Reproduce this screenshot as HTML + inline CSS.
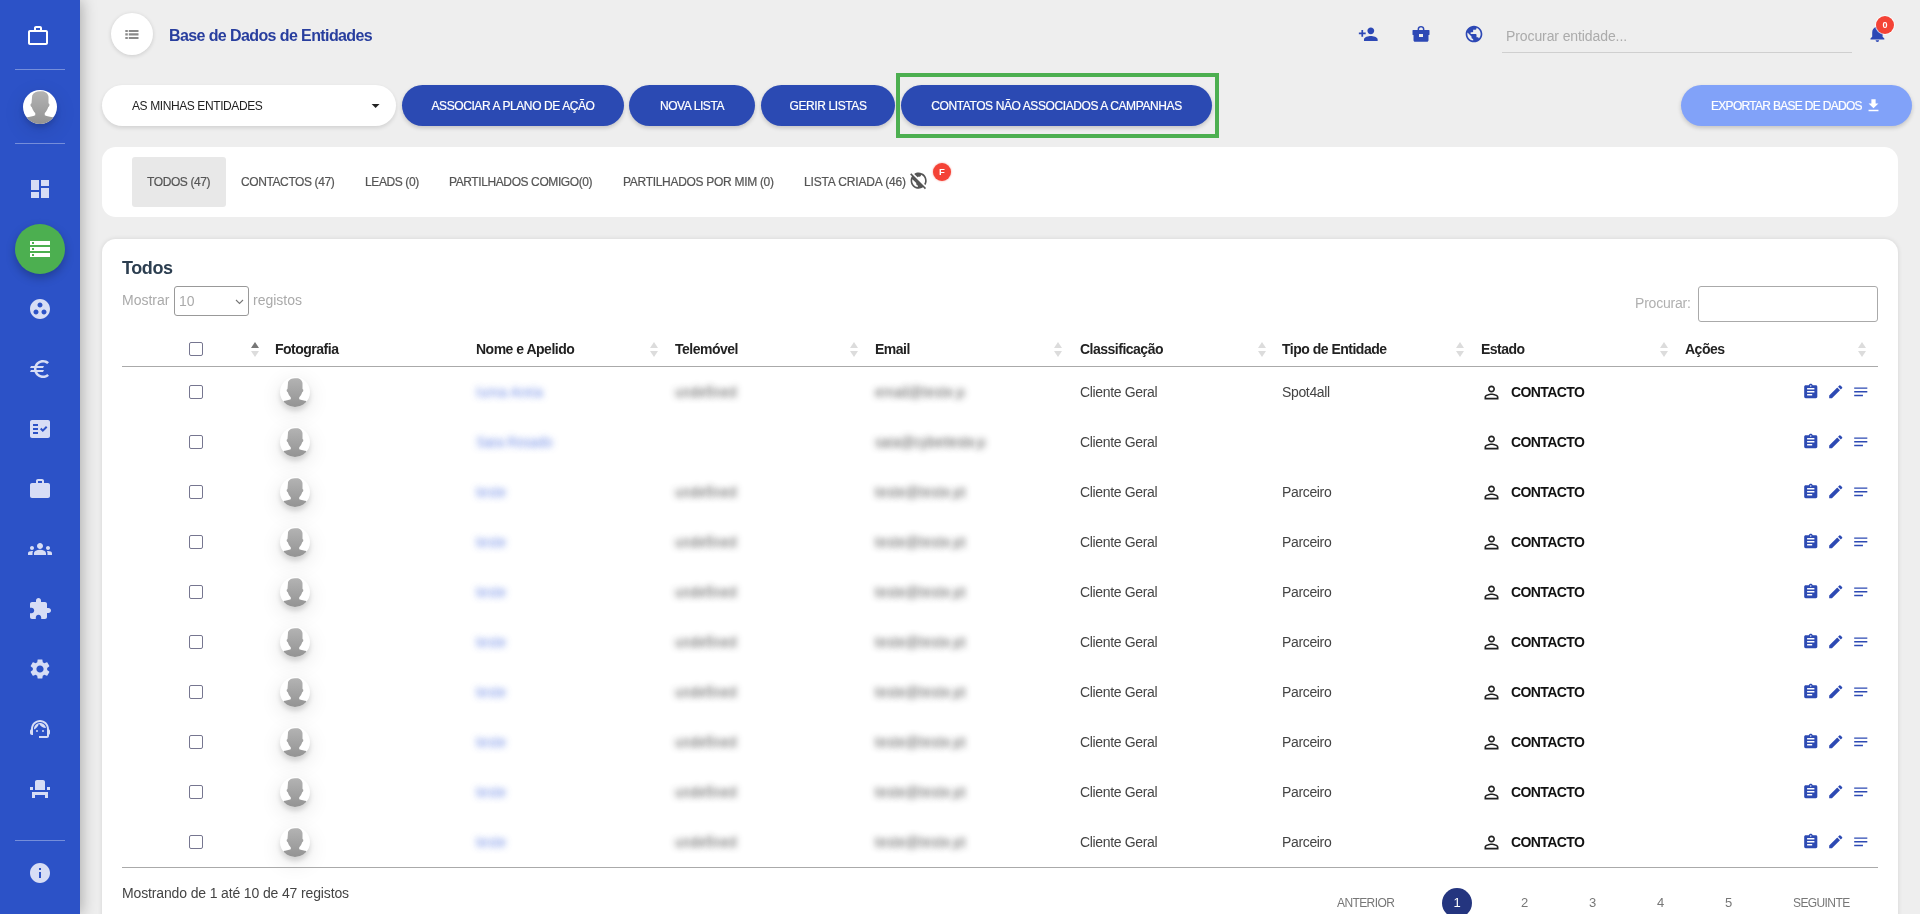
<!DOCTYPE html><html><head><meta charset="utf-8"><title>Base de Dados de Entidades</title><style>
*{box-sizing:border-box;margin:0;padding:0}
html,body{width:1920px;height:914px;overflow:hidden;background:#eeeeee;font-family:"Liberation Sans",sans-serif;position:relative}
.ab{position:absolute}
.ic{position:absolute;display:block}
.av{position:absolute;border-radius:50%;background:#fff;overflow:hidden}
.av svg{display:block}
#side{position:absolute;left:0;top:0;width:80px;height:914px;background:#2c52c7;box-shadow:2px 0 14px rgba(0,0,0,.28);z-index:5}
.div{position:absolute;left:15px;width:50px;height:1px;background:rgba(255,255,255,.35)}
.t{position:absolute;white-space:nowrap;line-height:1}
.btn{position:absolute;top:85px;height:41px;border-radius:21px;background:#2b4ab3;color:#fff;font-size:12px;letter-spacing:-.4px;line-height:43px;text-align:center;-webkit-text-stroke:.2px #fff;box-shadow:0 2px 4px rgba(0,0,0,.18)}
.card{position:absolute;background:#fff;border-radius:14px}
.tab{position:absolute;top:157px;height:50px;line-height:50px;font-size:12px;letter-spacing:-.4px;color:#555;-webkit-text-stroke:.2px #555;white-space:nowrap}
.th{position:absolute;top:341px;font-size:14px;font-weight:bold;color:#222;letter-spacing:-.5px;white-space:nowrap;line-height:16px}
.sort{position:absolute;width:8px;height:16px}
.sort:before{content:"";position:absolute;left:0;top:0;border-left:4px solid transparent;border-right:4px solid transparent;border-bottom:6px solid #dcdcdc}
.sort:after{content:"";position:absolute;left:0;top:9px;border-left:4px solid transparent;border-right:4px solid transparent;border-top:6px solid #dcdcdc}
.sort.asc:before{border-bottom-color:#777}
.cb{position:absolute;left:189px;width:14px;height:14px;border:1px solid #767690;border-radius:2px;background:#fff}
.cell{position:absolute;font-size:14px;color:#444;letter-spacing:-.35px;white-space:nowrap;line-height:16px}
.blur{letter-spacing:0;color:transparent!important;text-shadow:0 0 6px rgba(60,60,60,.85)}
.blurb{letter-spacing:0;color:transparent!important;text-shadow:0 0 6px rgba(55,95,220,.7)}
.st{position:absolute;left:1511px;font-size:14px;font-weight:bold;color:#111;letter-spacing:-.6px;line-height:16px}
.pg{position:absolute;top:895px;font-size:12px;color:#777;line-height:16px;white-space:nowrap}
</style></head><body><div id="root" style="position:absolute;left:0;top:0;width:1920px;height:914px;overflow:hidden;will-change:transform">
<div id="side"><svg class="ic" style="left:26.0px;top:23.5px;width:24px;height:24px;" viewBox="0 0 24 24"><path fill="#ffffff" d="M14 6V4h-4v2h4zM4 8v11h16V8H4zm16-2c1.11 0 2 .89 2 2v11c0 1.11-.89 2-2 2H4c-1.11 0-2-.89-2-2l.01-11c0-1.11.88-2 1.99-2h4V4c0-1.11.89-2 2-2h4c1.11 0 2 .89 2 2v2h4z"/></svg><div class="div" style="top:69px"></div><div class="av" style="left:23.0px;top:90.0px;width:34px;height:34px;box-shadow:0 4px 5px rgba(0,0,0,.13),0 6px 22px rgba(0,0,0,.11);"><svg viewBox="0 0 100 100" width="34" height="34"><defs><linearGradient id="g" x1="0" y1="0" x2="0" y2="1"><stop offset="0" stop-color="#b3b3b3"/><stop offset="1" stop-color="#939393"/></linearGradient></defs><path fill="url(#g)" d="M50 4C40 4 31 7 27 16L25 40C21 40 21 48 26 51C28 58 32 64 36 68L36 74C30 77 18 79 12 80L12 100L88 100L88 80C82 79 70 77 64 74L64 68C68 64 72 58 74 51C79 48 79 40 75 40L75 20C74 10 63 3 55 4C53 4 52 4 50 4Z"/></svg></div><div class="div" style="top:143px"></div><svg class="ic" style="left:28.0px;top:177.0px;width:24px;height:24px;" viewBox="0 0 24 24"><path fill="#d7ddf5" d="M3 13h8V3H3v10zm0 8h8v-6H3v6zm10 0h8V11h-8v10zm0-18v6h8V3h-8z"/></svg><div class="ab" style="left:15px;top:224px;width:50px;height:50px;border-radius:50%;background:#4caf50;box-shadow:0 4px 10px rgba(0,0,0,.25)"></div><svg class="ic" style="left:28.0px;top:237.0px;width:24px;height:24px;" viewBox="0 0 24 24"><path fill="#ffffff" d="M2 20h20v-4H2v4zm2-3h2v2H4v-2zM2 4v4h20V4H2zm4 3H4V5h2v2zm-4 7h20v-4H2v4zm2-3h2v2H4v-2z"/></svg><svg class="ic" style="left:28.0px;top:297.0px;width:24px;height:24px;" viewBox="0 0 24 24"><path fill="#d7ddf5" d="M12 2C6.48 2 2 6.48 2 12s4.48 10 10 10 10-4.48 10-10S17.52 2 12 2zM8 17.5c-1.38 0-2.5-1.12-2.5-2.5s1.12-2.5 2.5-2.5 2.5 1.12 2.5 2.5-1.12 2.5-2.5 2.5zM9.5 8c0-1.38 1.12-2.5 2.5-2.5s2.5 1.12 2.5 2.5-1.12 2.5-2.5 2.5S9.5 9.38 9.5 8zm6.5 9.5c-1.38 0-2.5-1.12-2.5-2.5s1.12-2.5 2.5-2.5 2.5 1.12 2.5 2.5-1.12 2.5-2.5 2.5z"/></svg><svg class="ic" style="left:28.0px;top:357.0px;width:24px;height:24px;" viewBox="0 0 24 24"><path fill="#d7ddf5" d="M15 18.5c-2.51 0-4.68-1.42-5.76-3.5H15l1-2H8.58c-.05-.33-.08-.66-.08-1s.03-.67.08-1H15l1-2H9.24C10.32 6.92 12.5 5.5 15 5.5c1.61 0 3.09.59 4.23 1.57L21 5.3C19.410 3.87 17.3 3 15 3c-3.92 0-7.24 2.51-8.48 6H3l-1 2h4.06c-.04.33-.06.66-.06 1s.02.67.06 1H3l-1 2h4.520c1.24 3.49 4.56 6 8.48 6 2.310 0 4.41-.87 6-2.3l-1.78-1.77c-1.13.98-2.6 1.57-4.22 1.57z"/></svg><svg class="ic" style="left:28.0px;top:417.0px;width:24px;height:24px;" viewBox="0 0 24 24"><path fill="#d7ddf5" d="M20 3H4c-1.1 0-2 .9-2 2v14c0 1.1.9 2 2 2h16c1.1 0 2-.9 2-2V5c0-1.1-.9-2-2-2zM10 17H5v-2h5v2zm0-4H5v-2h5v2zm0-4H5V7h5v2zm4.82 6L12 12.16l1.41-1.41 1.41 1.42L17.99 9l1.42 1.42L14.82 15z"/></svg><svg class="ic" style="left:28.0px;top:477.0px;width:24px;height:24px;" viewBox="0 0 24 24"><path fill="#d7ddf5" d="M20 6h-4V4c0-1.11-.89-2-2-2h-4c-1.11 0-2 .89-2 2v2H4c-1.11 0-1.99.89-1.99 2L2 19c0 1.11.89 2 2 2h16c1.11 0 2-.89 2-2V8c0-1.11-.89-2-2-2zm-6 0h-4V4h4v2z"/></svg><svg class="ic" style="left:28.0px;top:537.0px;width:24px;height:24px;" viewBox="0 0 24 24"><path fill="#d7ddf5" d="M12 12.75c1.63 0 3.07.39 4.24.9 1.08.48 1.76 1.56 1.76 2.73V18H6v-1.61c0-1.18.68-2.26 1.76-2.73 1.17-.52 2.61-.91 4.24-.91zM4 13c1.1 0 2-.9 2-2s-.9-2-2-2-2 .9-2 2 .9 2 2 2zm1.13 1.1c-.37-.06-.74-.1-1.13-.1-.99 0-1.93.21-2.78.58C.48 14.9 0 15.62 0 16.43V18h4.5v-1.61c0-.83.23-1.610.63-2.29zM20 13c1.1 0 2-.9 2-2s-.9-2-2-2-2 .9-2 2 .9 2 2 2zm4 3.43c0-.81-.48-1.53-1.22-1.85-.85-.37-1.79-.58-2.78-.58-.39 0-.76.04-1.13.1.4.68.63 1.46.63 2.29V18H24v-1.57zM12 6c1.66 0 3 1.34 3 3s-1.34 3-3 3-3-1.34-3-3 1.34-3 3-3z"/></svg><svg class="ic" style="left:28.0px;top:597.0px;width:24px;height:24px;" viewBox="0 0 24 24"><path fill="#d7ddf5" d="M20.5 11H19V7c0-1.1-.9-2-2-2h-4V3.5C13 2.12 11.88 1 10.5 1S8 2.12 8 3.5V5H4c-1.1 0-1.99.9-1.99 2v3.8H3.5c1.49 0 2.7 1.21 2.7 2.7s-1.21 2.7-2.7 2.7H2V20c0 1.1.9 2 2 2h3.8v-1.5c0-1.49 1.21-2.7 2.7-2.7 1.49 0 2.7 1.21 2.7 2.7V22H17c1.1 0 2-.9 2-2v-4h1.5c1.38 0 2.5-1.12 2.5-2.5S21.88 11 20.5 11z"/></svg><svg class="ic" style="left:28.0px;top:657.0px;width:24px;height:24px;" viewBox="0 0 24 24"><path fill="#d7ddf5" d="M19.14 12.94c.04-.3.06-.61.06-.94 0-.32-.02-.64-.07-.94l2.03-1.58c.18-.14.23-.41.12-.61l-1.92-3.32c-.12-.22-.37-.29-.59-.22l-2.39.96c-.5-.38-1.03-.7-1.62-.94l-.36-2.54c-.04-.24-.24-.41-.48-.41h-3.84c-.24 0-.43.17-.47.41l-.36 2.54c-.59.24-1.13.57-1.62.94l-2.39-.96c-.22-.08-.47 0-.59.22L2.74 8.87c-.12.21-.08.47.12.61l2.03 1.58c-.05.3-.09.63-.09.94s.02.64.07.94l-2.03 1.58c-.18.14-.23.41-.12.61l1.92 3.32c.12.22.37.29.59.22l2.39-.96c.5.38 1.03.7 1.62.94l.36 2.54c.05.24.24.41.48.41h3.84c.24 0 .44-.17.47-.41l.36-2.54c.59-.24 1.13-.56 1.62-.94l2.39.96c.22.08.47 0 .59-.22l1.92-3.32c.12-.22.07-.47-.12-.61l-2.01-1.58zM12 15.6c-1.98 0-3.6-1.62-3.6-3.6s1.62-3.6 3.6-3.6 3.6 1.62 3.6 3.6-1.62 3.6-3.6 3.6z"/></svg><svg class="ic" style="left:28.0px;top:717.0px;width:24px;height:24px;" viewBox="0 0 24 24"><path fill="#d7ddf5" d="M21 12.22C21 6.73 16.74 3 12 3c-4.69 0-9 3.65-9 9.28-.6.34-1 .98-1 1.72v2c0 1.1.9 2 2 2h1v-6.1c0-3.87 3.13-7 7-7s7 3.13 7 7V19h-8v2h8c1.1 0 2-.9 2-2v-1.22c.59-.31 1-.92 1-1.64v-2.3c0-.7-.41-1.31-1-1.62zM8 14a1 1 0 1 0 2 0a1 1 0 1 0-2 0zM14 14a1 1 0 1 0 2 0a1 1 0 1 0-2 0zM18 11.03C17.52 8.18 15.04 6 12.05 6c-3.03 0-6.29 2.51-6.03 6.45 2.47-1.01 4.33-3.21 4.86-5.89 1.31 2.63 4 4.44 7.12 4.47z"/></svg><svg class="ic" style="left:28.0px;top:777.0px;width:24px;height:24px;" viewBox="0 0 24 24"><path fill="#d7ddf5" d="M4 18v3h3v-3h10v3h3v-6H4zm15-8h3v3h-3zM2 10h3v3H2zm15 3H7V5c0-1.1.9-2 2-2h6c1.1 0 2 .9 2 2v8z"/></svg><div class="div" style="top:840px"></div><svg class="ic" style="left:28.0px;top:861.0px;width:24px;height:24px;" viewBox="0 0 24 24"><path fill="#d7ddf5" d="M12 2C6.48 2 2 6.48 2 12s4.48 10 10 10 10-4.48 10-10S17.52 2 12 2zm1 15h-2v-6h2v6zm0-8h-2V7h2v2z"/></svg></div>
<div class="ab" style="left:111px;top:13px;width:42px;height:42px;border-radius:50%;background:#fff;box-shadow:0 1px 4px rgba(0,0,0,.15)"></div>
<svg class="ic" style="left:125px;top:29px;width:14px;height:11px" viewBox="0 0 14 11"><path fill="#8a8a8a" d="M.3 .9h2.5v2.1h-2.5zM3.8 .9h9.7v2.1h-9.7zM.3 4.3h2.5v2.3h-2.5zM3.8 4.3h9.7v2.3h-9.7zM.3 8h2.5v2.1h-2.5zM3.8 8h9.7v2.1h-9.7z"/></svg>
<div class="t" style="left:169px;top:28px;font-size:16px;font-weight:bold;color:#283e9e;letter-spacing:-.6px">Base de Dados de Entidades</div>
<svg class="ic" style="left:1357.8px;top:23.8px;width:20.5px;height:20.5px;" viewBox="0 0 24 24"><path fill="#2d48b5" d="M15 12c2.21 0 4-1.79 4-4s-1.79-4-4-4-4 1.79-4 4 1.79 4 4 4zm-9-2V7H4v3H1v2h3v3h2v-3h3v-2H6zm9 4c-2.67 0-8 1.34-8 4v2h16v-2c0-2.66-5.33-4-8-4z"/></svg>
<svg class="ic" style="left:1411px;top:24px;width:20px;height:20px" viewBox="0 0 20 20"><path fill="#2d48b5" fill-rule="evenodd" d="M6.6 5.9V5C6.6 3 8 1.9 10 1.9S13.4 3 13.4 5V5.9H18c.3 0 .5.2.5.5V10.5c0 .3-.3.6-.6.6H17.5V16.3c0 .8-.7 1.5-1.5 1.5H4c-.8 0-1.5-.7-1.5-1.5V11.1H2.1c-.3 0-.6-.3-.6-.6V6.4c0-.3.2-.5.5-.5ZM8.1 5.9H11.9V5c0-1-.8-1.6-1.9-1.6S8.1 4 8.1 5ZM8 9.9V13H12V9.9Z"/></svg>
<svg class="ic" style="left:1464.0px;top:24.0px;width:20px;height:20px;" viewBox="0 0 24 24"><path fill="#2d48b5" d="M12 2C6.48 2 2 6.48 2 12s4.48 10 10 10 10-4.48 10-10S17.52 2 12 2zm-1 17.93c-3.95-.49-7-3.85-7-7.93 0-.62.08-1.21.21-1.79L9 15v1c0 1.1.9 2 2 2v1.93zm6.9-2.54c-.26-.81-1-1.39-1.9-1.39h-1v-3c0-.55-.45-1-1-1H8v-2h2c.55 0 1-.45 1-1V7h2c1.1 0 2-.9 2-2v-.41c2.93 1.19 5 4.06 5 7.41 0 2.08-.8 3.97-2.1 5.39z"/></svg>
<div class="t" style="left:1506px;top:29px;font-size:14px;color:#ababab;letter-spacing:-.1px">Procurar entidade...</div>
<div class="ab" style="left:1502px;top:52px;width:350px;height:1px;background:#cfcfcf"></div>
<svg class="ic" style="left:1866.6px;top:22.9px;width:20.8px;height:20.8px;" viewBox="0 0 24 24"><path fill="#2d48b5" d="M12 22c1.1 0 2-.9 2-2h-4c0 1.1.89 2 2 2zm6-6v-5c0-3.07-1.64-5.64-4.5-6.32V4c0-.83-.67-1.5-1.5-1.5s-1.5.67-1.5 1.5v.68C7.63 5.36 6 7.92 6 11v5l-2 2v1h16v-1l-2-2z"/></svg>
<div class="ab" style="left:1876px;top:16px;width:18px;height:18px;border-radius:50%;background:#f44336;color:#fff;font-size:9px;font-weight:bold;text-align:center;line-height:19px;box-shadow:0 0 0 1px rgba(255,255,255,.7)">0</div>
<div class="ab" style="left:102px;top:85px;width:294px;height:41px;border-radius:21px;background:#fff;box-shadow:0 2px 4px rgba(0,0,0,.12)"></div>
<div class="t" style="left:132px;top:100px;font-size:12px;letter-spacing:-.4px;color:#222">AS MINHAS ENTIDADES</div>
<svg class="ic" style="left:366.4px;top:95.5px;width:19.2px;height:19.2px" viewBox="0 0 24 24"><path fill="#222" d="M7 10l5 5 5-5z"/></svg>
<div class="btn" style="left:402px;width:222px">ASSOCIAR A PLANO DE AÇÃO</div>
<div class="btn" style="left:629px;width:126px">NOVA LISTA</div>
<div class="btn" style="left:761px;width:134px">GERIR LISTAS</div>
<div class="btn" style="left:901px;width:311px">CONTATOS NÃO ASSOCIADOS A CAMPANHAS</div>
<div class="ab" style="left:896px;top:73px;width:323px;height:65px;border:4px solid #4caf50"></div>
<div class="btn" style="left:1681px;width:231px;background:#81a2f9;text-align:left;padding-left:30px;letter-spacing:-.7px">EXPORTAR BASE DE DADOS</div>
<svg class="ic" style="left:1864.5px;top:96.5px;width:17px;height:17px;" viewBox="0 0 24 24"><path fill="#ffffff" d="M19 9h-4V3H9v6H5l7 7 7-7zM5 18v2h14v-2H5z"/></svg>
<div class="card" style="left:102px;top:147px;width:1796px;height:70px"></div>
<div class="ab" style="left:132px;top:157px;width:94px;height:50px;background:#e8e8e8;border-radius:3px"></div>
<div class="tab" style="left:147px">TODOS (47)</div>
<div class="tab" style="left:241px">CONTACTOS (47)</div>
<div class="tab" style="left:365px">LEADS (0)</div>
<div class="tab" style="left:449px">PARTILHADOS COMIGO(0)</div>
<div class="tab" style="left:623px;letter-spacing:-.3px">PARTILHADOS POR MIM (0)</div>
<div class="tab" style="left:804px;letter-spacing:-.15px">LISTA CRIADA (46)</div>
<svg class="ic" style="left:909.4px;top:171.3px;width:19.3px;height:19.3px;" viewBox="0 0 24 24"><path fill="#555" d="M11 8.17L6.49 3.66C8.07 2.61 9.96 2 12 2c5.52 0 10 4.48 10 10 0 2.04-.61 3.93-1.66 5.51l-1.46-1.46C19.59 14.870 20 13.48 20 12c0-3.35-2.07-6.22-5-7.41V5c0 1.1-.9 2-2 2h-2v1.17zm10.19 13.02l-1.41 1.41-2.27-2.27C15.93 21.39 14.04 22 12 22 6.48 22 2 17.52 2 12c0-2.04.61-3.93 1.66-5.51L1.39 4.22 2.8 2.81l18.39 18.38zM11 18c-1.1 0-2-.9-2-2v-1l-4.79-4.79C4.08 10.79 4 11.38 4 12c0 4.08 3.05 7.44 7 7.93V18z"/></svg>
<div class="ab" style="left:933px;top:163px;width:18px;height:18px;border-radius:50%;background:#f44336;color:#fff;font-size:9.5px;font-weight:bold;text-align:center;line-height:18px;box-shadow:0 0 2px rgba(244,67,54,.6)">F</div>
<div class="card" style="left:102px;top:239px;width:1796px;height:700px;box-shadow:0 0 5px rgba(0,0,0,.11)"></div>
<div class="t" style="left:122px;top:259px;font-size:18px;font-weight:bold;color:#2c3e50;letter-spacing:-.4px">Todos</div>
<div class="t" style="left:122px;top:293px;font-size:14px;color:#aaa">Mostrar</div>
<div class="ab" style="left:174px;top:286px;width:75px;height:30px;border:1px solid #999;border-radius:3px;background:#fff"></div>
<div class="t" style="left:179px;top:294px;font-size:14px;color:#aaa">10</div>
<svg class="ic" style="left:235px;top:299px;width:9px;height:6px" viewBox="0 0 9 6"><path d="M1 1l3.5 3.5L8 1" fill="none" stroke="#777" stroke-width="1.1"/></svg>
<div class="t" style="left:253px;top:293px;font-size:14px;color:#aaa">registos</div>
<div class="t" style="left:1635px;top:296px;font-size:14px;color:#b0b0b0;letter-spacing:-.2px">Procurar:</div>
<div class="ab" style="left:1698px;top:286px;width:180px;height:36px;border:1px solid #aaa;border-radius:3px;background:#fff"></div>
<div class="cb" style="top:342px"></div>
<div class="sort asc" style="left:251px;top:342px"></div>
<div class="th" style="left:275px">Fotografia</div>
<div class="th" style="left:476px">Nome e Apelido</div>
<div class="sort" style="left:650px;top:342px"></div>
<div class="th" style="left:675px">Telemóvel</div>
<div class="sort" style="left:850px;top:342px"></div>
<div class="th" style="left:875px">Email</div>
<div class="sort" style="left:1054px;top:342px"></div>
<div class="th" style="left:1080px">Classificação</div>
<div class="sort" style="left:1258px;top:342px"></div>
<div class="th" style="left:1282px">Tipo de Entidade</div>
<div class="sort" style="left:1456px;top:342px"></div>
<div class="th" style="left:1481px">Estado</div>
<div class="sort" style="left:1660px;top:342px"></div>
<div class="th" style="left:1685px">Ações</div>
<div class="sort" style="left:1858px;top:342px"></div>
<div class="ab" style="left:122px;top:366px;width:1756px;height:1px;background:#aaa"></div>
<div class="cb" style="top:385px"></div>
<div class="av" style="left:280.0px;top:377.0px;width:30px;height:30px;box-shadow:0 4px 5px rgba(0,0,0,.13),0 6px 22px rgba(0,0,0,.11);"><svg viewBox="0 0 100 100" width="30" height="30"><defs><linearGradient id="g" x1="0" y1="0" x2="0" y2="1"><stop offset="0" stop-color="#b3b3b3"/><stop offset="1" stop-color="#939393"/></linearGradient></defs><path fill="url(#g)" d="M50 4C40 4 31 7 27 16L25 40C21 40 21 48 26 51C28 58 32 64 36 68L36 74C30 77 18 79 12 80L12 100L88 100L88 80C82 79 70 77 64 74L64 68C68 64 72 58 74 51C79 48 79 40 75 40L75 20C74 10 63 3 55 4C53 4 52 4 50 4Z"/></svg></div>
<div class="cell blurb" style="left:476px;top:384px;letter-spacing:0">Iuma Areia</div>
<div class="cell blur" style="left:675px;top:384px;color:#555">undefined</div>
<div class="cell blur" style="left:875px;top:384px;letter-spacing:0">email@teste.p</div>
<div class="cell" style="left:1080px;top:384px">Cliente Geral</div>
<div class="cell" style="left:1282px;top:384px">Spot4all</div>
<svg class="ic" style="left:1480.5px;top:381.5px;width:21px;height:21px;" viewBox="0 0 24 24"><path fill="#222" d="M12 5.9c1.16 0 2.1.94 2.1 2.1s-.94 2.1-2.1 2.1S9.9 9.16 9.9 8s.94-2.1 2.1-2.1m0 9c2.97 0 6.1 1.46 6.1 2.1v1.1H5.9V17c0-.64 3.13-2.1 6.1-2.1M12 4C9.79 4 8 5.79 8 8s1.79 4 4 4 4-1.79 4-4-1.79-4-4-4zm0 9c-2.67 0-8 1.34-8 4v3h16v-3c0-2.66-5.330-4-8-4z"/></svg>
<div class="st" style="top:384px">CONTACTO</div>
<svg class="ic" style="left:1801.8px;top:382.8px;width:17.5px;height:17.5px;" viewBox="0 0 24 24"><path fill="#2d4ab3" d="M19 3h-4.18C14.4 1.84 13.3 1 12 1c-1.3 0-2.4.84-2.82 2H5c-1.1 0-2 .9-2 2v14c0 1.1.9 2 2 2h14c1.1 0 2-.9 2-2V5c0-1.1-.9-2-2-2zm-7 0c.55 0 1 .45 1 1s-.45 1-1 1-1-.45-1-1 .45-1 1-1zm2 14H7v-2h7v2zm3-4H7v-2h10v2zm0-4H7V7h10v2z"/></svg>
<svg class="ic" style="left:1826.8px;top:383.2px;width:17.5px;height:17.5px;" viewBox="0 0 24 24"><path fill="#2d4ab3" d="M3 17.25V21h3.75L17.81 9.94l-3.75-3.75L3 17.25zM20.71 7.04c.39-.39.39-1.02 0-1.41l-2.34-2.34c-.39-.39-1.02-.39-1.41 0l-1.83 1.83 3.75 3.75 1.83-1.83z"/></svg>
<svg class="ic" style="left:1851.8px;top:383.2px;width:17.5px;height:17.5px;" viewBox="0 0 24 24"><path fill="#2d4ab3" d="M3 18h12v-2H3v2zM3 6v2h18V6H3zm0 7h18v-2H3v2z"/></svg>
<div class="cb" style="top:435px"></div>
<div class="av" style="left:280.0px;top:427.0px;width:30px;height:30px;box-shadow:0 4px 5px rgba(0,0,0,.13),0 6px 22px rgba(0,0,0,.11);"><svg viewBox="0 0 100 100" width="30" height="30"><defs><linearGradient id="g" x1="0" y1="0" x2="0" y2="1"><stop offset="0" stop-color="#b3b3b3"/><stop offset="1" stop-color="#939393"/></linearGradient></defs><path fill="url(#g)" d="M50 4C40 4 31 7 27 16L25 40C21 40 21 48 26 51C28 58 32 64 36 68L36 74C30 77 18 79 12 80L12 100L88 100L88 80C82 79 70 77 64 74L64 68C68 64 72 58 74 51C79 48 79 40 75 40L75 20C74 10 63 3 55 4C53 4 52 4 50 4Z"/></svg></div>
<div class="cell blurb" style="left:476px;top:434px;letter-spacing:-.5px">Sara Rosado</div>
<div class="cell blur" style="left:875px;top:434px;letter-spacing:-.45px">sara@cyberteste.p</div>
<div class="cell" style="left:1080px;top:434px">Cliente Geral</div>
<svg class="ic" style="left:1480.5px;top:431.5px;width:21px;height:21px;" viewBox="0 0 24 24"><path fill="#222" d="M12 5.9c1.16 0 2.1.94 2.1 2.1s-.94 2.1-2.1 2.1S9.9 9.16 9.9 8s.94-2.1 2.1-2.1m0 9c2.97 0 6.1 1.46 6.1 2.1v1.1H5.9V17c0-.64 3.13-2.1 6.1-2.1M12 4C9.79 4 8 5.79 8 8s1.79 4 4 4 4-1.79 4-4-1.79-4-4-4zm0 9c-2.67 0-8 1.34-8 4v3h16v-3c0-2.66-5.330-4-8-4z"/></svg>
<div class="st" style="top:434px">CONTACTO</div>
<svg class="ic" style="left:1801.8px;top:432.8px;width:17.5px;height:17.5px;" viewBox="0 0 24 24"><path fill="#2d4ab3" d="M19 3h-4.18C14.4 1.84 13.3 1 12 1c-1.3 0-2.4.84-2.82 2H5c-1.1 0-2 .9-2 2v14c0 1.1.9 2 2 2h14c1.1 0 2-.9 2-2V5c0-1.1-.9-2-2-2zm-7 0c.55 0 1 .45 1 1s-.45 1-1 1-1-.45-1-1 .45-1 1-1zm2 14H7v-2h7v2zm3-4H7v-2h10v2zm0-4H7V7h10v2z"/></svg>
<svg class="ic" style="left:1826.8px;top:433.2px;width:17.5px;height:17.5px;" viewBox="0 0 24 24"><path fill="#2d4ab3" d="M3 17.25V21h3.75L17.81 9.94l-3.75-3.75L3 17.25zM20.71 7.04c.39-.39.39-1.02 0-1.41l-2.34-2.34c-.39-.39-1.02-.39-1.41 0l-1.83 1.83 3.75 3.75 1.83-1.83z"/></svg>
<svg class="ic" style="left:1851.8px;top:433.2px;width:17.5px;height:17.5px;" viewBox="0 0 24 24"><path fill="#2d4ab3" d="M3 18h12v-2H3v2zM3 6v2h18V6H3zm0 7h18v-2H3v2z"/></svg>
<div class="cb" style="top:485px"></div>
<div class="av" style="left:280.0px;top:477.0px;width:30px;height:30px;box-shadow:0 4px 5px rgba(0,0,0,.13),0 6px 22px rgba(0,0,0,.11);"><svg viewBox="0 0 100 100" width="30" height="30"><defs><linearGradient id="g" x1="0" y1="0" x2="0" y2="1"><stop offset="0" stop-color="#b3b3b3"/><stop offset="1" stop-color="#939393"/></linearGradient></defs><path fill="url(#g)" d="M50 4C40 4 31 7 27 16L25 40C21 40 21 48 26 51C28 58 32 64 36 68L36 74C30 77 18 79 12 80L12 100L88 100L88 80C82 79 70 77 64 74L64 68C68 64 72 58 74 51C79 48 79 40 75 40L75 20C74 10 63 3 55 4C53 4 52 4 50 4Z"/></svg></div>
<div class="cell blurb" style="left:476px;top:484px;letter-spacing:0">teste</div>
<div class="cell blur" style="left:675px;top:484px;color:#555">undefined</div>
<div class="cell blur" style="left:875px;top:484px;letter-spacing:0">teste@teste.pt</div>
<div class="cell" style="left:1080px;top:484px">Cliente Geral</div>
<div class="cell" style="left:1282px;top:484px">Parceiro</div>
<svg class="ic" style="left:1480.5px;top:481.5px;width:21px;height:21px;" viewBox="0 0 24 24"><path fill="#222" d="M12 5.9c1.16 0 2.1.94 2.1 2.1s-.94 2.1-2.1 2.1S9.9 9.16 9.9 8s.94-2.1 2.1-2.1m0 9c2.97 0 6.1 1.46 6.1 2.1v1.1H5.9V17c0-.64 3.13-2.1 6.1-2.1M12 4C9.79 4 8 5.79 8 8s1.79 4 4 4 4-1.79 4-4-1.79-4-4-4zm0 9c-2.67 0-8 1.34-8 4v3h16v-3c0-2.66-5.330-4-8-4z"/></svg>
<div class="st" style="top:484px">CONTACTO</div>
<svg class="ic" style="left:1801.8px;top:482.8px;width:17.5px;height:17.5px;" viewBox="0 0 24 24"><path fill="#2d4ab3" d="M19 3h-4.18C14.4 1.84 13.3 1 12 1c-1.3 0-2.4.84-2.82 2H5c-1.1 0-2 .9-2 2v14c0 1.1.9 2 2 2h14c1.1 0 2-.9 2-2V5c0-1.1-.9-2-2-2zm-7 0c.55 0 1 .45 1 1s-.45 1-1 1-1-.45-1-1 .45-1 1-1zm2 14H7v-2h7v2zm3-4H7v-2h10v2zm0-4H7V7h10v2z"/></svg>
<svg class="ic" style="left:1826.8px;top:483.2px;width:17.5px;height:17.5px;" viewBox="0 0 24 24"><path fill="#2d4ab3" d="M3 17.25V21h3.75L17.81 9.94l-3.75-3.75L3 17.25zM20.71 7.04c.39-.39.39-1.02 0-1.41l-2.34-2.34c-.39-.39-1.02-.39-1.41 0l-1.83 1.83 3.75 3.75 1.83-1.83z"/></svg>
<svg class="ic" style="left:1851.8px;top:483.2px;width:17.5px;height:17.5px;" viewBox="0 0 24 24"><path fill="#2d4ab3" d="M3 18h12v-2H3v2zM3 6v2h18V6H3zm0 7h18v-2H3v2z"/></svg>
<div class="cb" style="top:535px"></div>
<div class="av" style="left:280.0px;top:527.0px;width:30px;height:30px;box-shadow:0 4px 5px rgba(0,0,0,.13),0 6px 22px rgba(0,0,0,.11);"><svg viewBox="0 0 100 100" width="30" height="30"><defs><linearGradient id="g" x1="0" y1="0" x2="0" y2="1"><stop offset="0" stop-color="#b3b3b3"/><stop offset="1" stop-color="#939393"/></linearGradient></defs><path fill="url(#g)" d="M50 4C40 4 31 7 27 16L25 40C21 40 21 48 26 51C28 58 32 64 36 68L36 74C30 77 18 79 12 80L12 100L88 100L88 80C82 79 70 77 64 74L64 68C68 64 72 58 74 51C79 48 79 40 75 40L75 20C74 10 63 3 55 4C53 4 52 4 50 4Z"/></svg></div>
<div class="cell blurb" style="left:476px;top:534px;letter-spacing:0">teste</div>
<div class="cell blur" style="left:675px;top:534px;color:#555">undefined</div>
<div class="cell blur" style="left:875px;top:534px;letter-spacing:0">teste@teste.pt</div>
<div class="cell" style="left:1080px;top:534px">Cliente Geral</div>
<div class="cell" style="left:1282px;top:534px">Parceiro</div>
<svg class="ic" style="left:1480.5px;top:531.5px;width:21px;height:21px;" viewBox="0 0 24 24"><path fill="#222" d="M12 5.9c1.16 0 2.1.94 2.1 2.1s-.94 2.1-2.1 2.1S9.9 9.16 9.9 8s.94-2.1 2.1-2.1m0 9c2.97 0 6.1 1.46 6.1 2.1v1.1H5.9V17c0-.64 3.13-2.1 6.1-2.1M12 4C9.79 4 8 5.79 8 8s1.79 4 4 4 4-1.79 4-4-1.79-4-4-4zm0 9c-2.67 0-8 1.34-8 4v3h16v-3c0-2.66-5.330-4-8-4z"/></svg>
<div class="st" style="top:534px">CONTACTO</div>
<svg class="ic" style="left:1801.8px;top:532.8px;width:17.5px;height:17.5px;" viewBox="0 0 24 24"><path fill="#2d4ab3" d="M19 3h-4.18C14.4 1.84 13.3 1 12 1c-1.3 0-2.4.84-2.82 2H5c-1.1 0-2 .9-2 2v14c0 1.1.9 2 2 2h14c1.1 0 2-.9 2-2V5c0-1.1-.9-2-2-2zm-7 0c.55 0 1 .45 1 1s-.45 1-1 1-1-.45-1-1 .45-1 1-1zm2 14H7v-2h7v2zm3-4H7v-2h10v2zm0-4H7V7h10v2z"/></svg>
<svg class="ic" style="left:1826.8px;top:533.2px;width:17.5px;height:17.5px;" viewBox="0 0 24 24"><path fill="#2d4ab3" d="M3 17.25V21h3.75L17.81 9.94l-3.75-3.75L3 17.25zM20.71 7.04c.39-.39.39-1.02 0-1.41l-2.34-2.34c-.39-.39-1.02-.39-1.41 0l-1.83 1.83 3.75 3.75 1.83-1.83z"/></svg>
<svg class="ic" style="left:1851.8px;top:533.2px;width:17.5px;height:17.5px;" viewBox="0 0 24 24"><path fill="#2d4ab3" d="M3 18h12v-2H3v2zM3 6v2h18V6H3zm0 7h18v-2H3v2z"/></svg>
<div class="cb" style="top:585px"></div>
<div class="av" style="left:280.0px;top:577.0px;width:30px;height:30px;box-shadow:0 4px 5px rgba(0,0,0,.13),0 6px 22px rgba(0,0,0,.11);"><svg viewBox="0 0 100 100" width="30" height="30"><defs><linearGradient id="g" x1="0" y1="0" x2="0" y2="1"><stop offset="0" stop-color="#b3b3b3"/><stop offset="1" stop-color="#939393"/></linearGradient></defs><path fill="url(#g)" d="M50 4C40 4 31 7 27 16L25 40C21 40 21 48 26 51C28 58 32 64 36 68L36 74C30 77 18 79 12 80L12 100L88 100L88 80C82 79 70 77 64 74L64 68C68 64 72 58 74 51C79 48 79 40 75 40L75 20C74 10 63 3 55 4C53 4 52 4 50 4Z"/></svg></div>
<div class="cell blurb" style="left:476px;top:584px;letter-spacing:0">teste</div>
<div class="cell blur" style="left:675px;top:584px;color:#555">undefined</div>
<div class="cell blur" style="left:875px;top:584px;letter-spacing:0">teste@teste.pt</div>
<div class="cell" style="left:1080px;top:584px">Cliente Geral</div>
<div class="cell" style="left:1282px;top:584px">Parceiro</div>
<svg class="ic" style="left:1480.5px;top:581.5px;width:21px;height:21px;" viewBox="0 0 24 24"><path fill="#222" d="M12 5.9c1.16 0 2.1.94 2.1 2.1s-.94 2.1-2.1 2.1S9.9 9.16 9.9 8s.94-2.1 2.1-2.1m0 9c2.97 0 6.1 1.46 6.1 2.1v1.1H5.9V17c0-.64 3.13-2.1 6.1-2.1M12 4C9.79 4 8 5.79 8 8s1.79 4 4 4 4-1.79 4-4-1.79-4-4-4zm0 9c-2.67 0-8 1.34-8 4v3h16v-3c0-2.66-5.330-4-8-4z"/></svg>
<div class="st" style="top:584px">CONTACTO</div>
<svg class="ic" style="left:1801.8px;top:582.8px;width:17.5px;height:17.5px;" viewBox="0 0 24 24"><path fill="#2d4ab3" d="M19 3h-4.18C14.4 1.84 13.3 1 12 1c-1.3 0-2.4.84-2.82 2H5c-1.1 0-2 .9-2 2v14c0 1.1.9 2 2 2h14c1.1 0 2-.9 2-2V5c0-1.1-.9-2-2-2zm-7 0c.55 0 1 .45 1 1s-.45 1-1 1-1-.45-1-1 .45-1 1-1zm2 14H7v-2h7v2zm3-4H7v-2h10v2zm0-4H7V7h10v2z"/></svg>
<svg class="ic" style="left:1826.8px;top:583.2px;width:17.5px;height:17.5px;" viewBox="0 0 24 24"><path fill="#2d4ab3" d="M3 17.25V21h3.75L17.81 9.94l-3.75-3.75L3 17.25zM20.71 7.04c.39-.39.39-1.02 0-1.41l-2.34-2.34c-.39-.39-1.02-.39-1.41 0l-1.83 1.83 3.75 3.75 1.83-1.83z"/></svg>
<svg class="ic" style="left:1851.8px;top:583.2px;width:17.5px;height:17.5px;" viewBox="0 0 24 24"><path fill="#2d4ab3" d="M3 18h12v-2H3v2zM3 6v2h18V6H3zm0 7h18v-2H3v2z"/></svg>
<div class="cb" style="top:635px"></div>
<div class="av" style="left:280.0px;top:627.0px;width:30px;height:30px;box-shadow:0 4px 5px rgba(0,0,0,.13),0 6px 22px rgba(0,0,0,.11);"><svg viewBox="0 0 100 100" width="30" height="30"><defs><linearGradient id="g" x1="0" y1="0" x2="0" y2="1"><stop offset="0" stop-color="#b3b3b3"/><stop offset="1" stop-color="#939393"/></linearGradient></defs><path fill="url(#g)" d="M50 4C40 4 31 7 27 16L25 40C21 40 21 48 26 51C28 58 32 64 36 68L36 74C30 77 18 79 12 80L12 100L88 100L88 80C82 79 70 77 64 74L64 68C68 64 72 58 74 51C79 48 79 40 75 40L75 20C74 10 63 3 55 4C53 4 52 4 50 4Z"/></svg></div>
<div class="cell blurb" style="left:476px;top:634px;letter-spacing:0">teste</div>
<div class="cell blur" style="left:675px;top:634px;color:#555">undefined</div>
<div class="cell blur" style="left:875px;top:634px;letter-spacing:0">teste@teste.pt</div>
<div class="cell" style="left:1080px;top:634px">Cliente Geral</div>
<div class="cell" style="left:1282px;top:634px">Parceiro</div>
<svg class="ic" style="left:1480.5px;top:631.5px;width:21px;height:21px;" viewBox="0 0 24 24"><path fill="#222" d="M12 5.9c1.16 0 2.1.94 2.1 2.1s-.94 2.1-2.1 2.1S9.9 9.16 9.9 8s.94-2.1 2.1-2.1m0 9c2.97 0 6.1 1.46 6.1 2.1v1.1H5.9V17c0-.64 3.13-2.1 6.1-2.1M12 4C9.79 4 8 5.79 8 8s1.79 4 4 4 4-1.79 4-4-1.79-4-4-4zm0 9c-2.67 0-8 1.34-8 4v3h16v-3c0-2.66-5.330-4-8-4z"/></svg>
<div class="st" style="top:634px">CONTACTO</div>
<svg class="ic" style="left:1801.8px;top:632.8px;width:17.5px;height:17.5px;" viewBox="0 0 24 24"><path fill="#2d4ab3" d="M19 3h-4.18C14.4 1.84 13.3 1 12 1c-1.3 0-2.4.84-2.82 2H5c-1.1 0-2 .9-2 2v14c0 1.1.9 2 2 2h14c1.1 0 2-.9 2-2V5c0-1.1-.9-2-2-2zm-7 0c.55 0 1 .45 1 1s-.45 1-1 1-1-.45-1-1 .45-1 1-1zm2 14H7v-2h7v2zm3-4H7v-2h10v2zm0-4H7V7h10v2z"/></svg>
<svg class="ic" style="left:1826.8px;top:633.2px;width:17.5px;height:17.5px;" viewBox="0 0 24 24"><path fill="#2d4ab3" d="M3 17.25V21h3.75L17.81 9.94l-3.75-3.75L3 17.25zM20.71 7.04c.39-.39.39-1.02 0-1.41l-2.34-2.34c-.39-.39-1.02-.39-1.41 0l-1.83 1.83 3.75 3.75 1.83-1.83z"/></svg>
<svg class="ic" style="left:1851.8px;top:633.2px;width:17.5px;height:17.5px;" viewBox="0 0 24 24"><path fill="#2d4ab3" d="M3 18h12v-2H3v2zM3 6v2h18V6H3zm0 7h18v-2H3v2z"/></svg>
<div class="cb" style="top:685px"></div>
<div class="av" style="left:280.0px;top:677.0px;width:30px;height:30px;box-shadow:0 4px 5px rgba(0,0,0,.13),0 6px 22px rgba(0,0,0,.11);"><svg viewBox="0 0 100 100" width="30" height="30"><defs><linearGradient id="g" x1="0" y1="0" x2="0" y2="1"><stop offset="0" stop-color="#b3b3b3"/><stop offset="1" stop-color="#939393"/></linearGradient></defs><path fill="url(#g)" d="M50 4C40 4 31 7 27 16L25 40C21 40 21 48 26 51C28 58 32 64 36 68L36 74C30 77 18 79 12 80L12 100L88 100L88 80C82 79 70 77 64 74L64 68C68 64 72 58 74 51C79 48 79 40 75 40L75 20C74 10 63 3 55 4C53 4 52 4 50 4Z"/></svg></div>
<div class="cell blurb" style="left:476px;top:684px;letter-spacing:0">teste</div>
<div class="cell blur" style="left:675px;top:684px;color:#555">undefined</div>
<div class="cell blur" style="left:875px;top:684px;letter-spacing:0">teste@teste.pt</div>
<div class="cell" style="left:1080px;top:684px">Cliente Geral</div>
<div class="cell" style="left:1282px;top:684px">Parceiro</div>
<svg class="ic" style="left:1480.5px;top:681.5px;width:21px;height:21px;" viewBox="0 0 24 24"><path fill="#222" d="M12 5.9c1.16 0 2.1.94 2.1 2.1s-.94 2.1-2.1 2.1S9.9 9.16 9.9 8s.94-2.1 2.1-2.1m0 9c2.97 0 6.1 1.46 6.1 2.1v1.1H5.9V17c0-.64 3.13-2.1 6.1-2.1M12 4C9.79 4 8 5.79 8 8s1.79 4 4 4 4-1.79 4-4-1.79-4-4-4zm0 9c-2.67 0-8 1.34-8 4v3h16v-3c0-2.66-5.330-4-8-4z"/></svg>
<div class="st" style="top:684px">CONTACTO</div>
<svg class="ic" style="left:1801.8px;top:682.8px;width:17.5px;height:17.5px;" viewBox="0 0 24 24"><path fill="#2d4ab3" d="M19 3h-4.18C14.4 1.84 13.3 1 12 1c-1.3 0-2.4.84-2.82 2H5c-1.1 0-2 .9-2 2v14c0 1.1.9 2 2 2h14c1.1 0 2-.9 2-2V5c0-1.1-.9-2-2-2zm-7 0c.55 0 1 .45 1 1s-.45 1-1 1-1-.45-1-1 .45-1 1-1zm2 14H7v-2h7v2zm3-4H7v-2h10v2zm0-4H7V7h10v2z"/></svg>
<svg class="ic" style="left:1826.8px;top:683.2px;width:17.5px;height:17.5px;" viewBox="0 0 24 24"><path fill="#2d4ab3" d="M3 17.25V21h3.75L17.81 9.94l-3.75-3.75L3 17.25zM20.71 7.04c.39-.39.39-1.02 0-1.41l-2.34-2.34c-.39-.39-1.02-.39-1.41 0l-1.83 1.83 3.75 3.75 1.83-1.83z"/></svg>
<svg class="ic" style="left:1851.8px;top:683.2px;width:17.5px;height:17.5px;" viewBox="0 0 24 24"><path fill="#2d4ab3" d="M3 18h12v-2H3v2zM3 6v2h18V6H3zm0 7h18v-2H3v2z"/></svg>
<div class="cb" style="top:735px"></div>
<div class="av" style="left:280.0px;top:727.0px;width:30px;height:30px;box-shadow:0 4px 5px rgba(0,0,0,.13),0 6px 22px rgba(0,0,0,.11);"><svg viewBox="0 0 100 100" width="30" height="30"><defs><linearGradient id="g" x1="0" y1="0" x2="0" y2="1"><stop offset="0" stop-color="#b3b3b3"/><stop offset="1" stop-color="#939393"/></linearGradient></defs><path fill="url(#g)" d="M50 4C40 4 31 7 27 16L25 40C21 40 21 48 26 51C28 58 32 64 36 68L36 74C30 77 18 79 12 80L12 100L88 100L88 80C82 79 70 77 64 74L64 68C68 64 72 58 74 51C79 48 79 40 75 40L75 20C74 10 63 3 55 4C53 4 52 4 50 4Z"/></svg></div>
<div class="cell blurb" style="left:476px;top:734px;letter-spacing:0">teste</div>
<div class="cell blur" style="left:675px;top:734px;color:#555">undefined</div>
<div class="cell blur" style="left:875px;top:734px;letter-spacing:0">teste@teste.pt</div>
<div class="cell" style="left:1080px;top:734px">Cliente Geral</div>
<div class="cell" style="left:1282px;top:734px">Parceiro</div>
<svg class="ic" style="left:1480.5px;top:731.5px;width:21px;height:21px;" viewBox="0 0 24 24"><path fill="#222" d="M12 5.9c1.16 0 2.1.94 2.1 2.1s-.94 2.1-2.1 2.1S9.9 9.16 9.9 8s.94-2.1 2.1-2.1m0 9c2.97 0 6.1 1.46 6.1 2.1v1.1H5.9V17c0-.64 3.13-2.1 6.1-2.1M12 4C9.79 4 8 5.79 8 8s1.79 4 4 4 4-1.79 4-4-1.79-4-4-4zm0 9c-2.67 0-8 1.34-8 4v3h16v-3c0-2.66-5.330-4-8-4z"/></svg>
<div class="st" style="top:734px">CONTACTO</div>
<svg class="ic" style="left:1801.8px;top:732.8px;width:17.5px;height:17.5px;" viewBox="0 0 24 24"><path fill="#2d4ab3" d="M19 3h-4.18C14.4 1.84 13.3 1 12 1c-1.3 0-2.4.84-2.82 2H5c-1.1 0-2 .9-2 2v14c0 1.1.9 2 2 2h14c1.1 0 2-.9 2-2V5c0-1.1-.9-2-2-2zm-7 0c.55 0 1 .45 1 1s-.45 1-1 1-1-.45-1-1 .45-1 1-1zm2 14H7v-2h7v2zm3-4H7v-2h10v2zm0-4H7V7h10v2z"/></svg>
<svg class="ic" style="left:1826.8px;top:733.2px;width:17.5px;height:17.5px;" viewBox="0 0 24 24"><path fill="#2d4ab3" d="M3 17.25V21h3.75L17.81 9.94l-3.75-3.75L3 17.25zM20.71 7.04c.39-.39.39-1.02 0-1.41l-2.34-2.34c-.39-.39-1.02-.39-1.41 0l-1.83 1.83 3.75 3.75 1.83-1.83z"/></svg>
<svg class="ic" style="left:1851.8px;top:733.2px;width:17.5px;height:17.5px;" viewBox="0 0 24 24"><path fill="#2d4ab3" d="M3 18h12v-2H3v2zM3 6v2h18V6H3zm0 7h18v-2H3v2z"/></svg>
<div class="cb" style="top:785px"></div>
<div class="av" style="left:280.0px;top:777.0px;width:30px;height:30px;box-shadow:0 4px 5px rgba(0,0,0,.13),0 6px 22px rgba(0,0,0,.11);"><svg viewBox="0 0 100 100" width="30" height="30"><defs><linearGradient id="g" x1="0" y1="0" x2="0" y2="1"><stop offset="0" stop-color="#b3b3b3"/><stop offset="1" stop-color="#939393"/></linearGradient></defs><path fill="url(#g)" d="M50 4C40 4 31 7 27 16L25 40C21 40 21 48 26 51C28 58 32 64 36 68L36 74C30 77 18 79 12 80L12 100L88 100L88 80C82 79 70 77 64 74L64 68C68 64 72 58 74 51C79 48 79 40 75 40L75 20C74 10 63 3 55 4C53 4 52 4 50 4Z"/></svg></div>
<div class="cell blurb" style="left:476px;top:784px;letter-spacing:0">teste</div>
<div class="cell blur" style="left:675px;top:784px;color:#555">undefined</div>
<div class="cell blur" style="left:875px;top:784px;letter-spacing:0">teste@teste.pt</div>
<div class="cell" style="left:1080px;top:784px">Cliente Geral</div>
<div class="cell" style="left:1282px;top:784px">Parceiro</div>
<svg class="ic" style="left:1480.5px;top:781.5px;width:21px;height:21px;" viewBox="0 0 24 24"><path fill="#222" d="M12 5.9c1.16 0 2.1.94 2.1 2.1s-.94 2.1-2.1 2.1S9.9 9.16 9.9 8s.94-2.1 2.1-2.1m0 9c2.97 0 6.1 1.46 6.1 2.1v1.1H5.9V17c0-.64 3.13-2.1 6.1-2.1M12 4C9.79 4 8 5.79 8 8s1.79 4 4 4 4-1.79 4-4-1.79-4-4-4zm0 9c-2.67 0-8 1.34-8 4v3h16v-3c0-2.66-5.330-4-8-4z"/></svg>
<div class="st" style="top:784px">CONTACTO</div>
<svg class="ic" style="left:1801.8px;top:782.8px;width:17.5px;height:17.5px;" viewBox="0 0 24 24"><path fill="#2d4ab3" d="M19 3h-4.18C14.4 1.84 13.3 1 12 1c-1.3 0-2.4.84-2.82 2H5c-1.1 0-2 .9-2 2v14c0 1.1.9 2 2 2h14c1.1 0 2-.9 2-2V5c0-1.1-.9-2-2-2zm-7 0c.55 0 1 .45 1 1s-.45 1-1 1-1-.45-1-1 .45-1 1-1zm2 14H7v-2h7v2zm3-4H7v-2h10v2zm0-4H7V7h10v2z"/></svg>
<svg class="ic" style="left:1826.8px;top:783.2px;width:17.5px;height:17.5px;" viewBox="0 0 24 24"><path fill="#2d4ab3" d="M3 17.25V21h3.75L17.81 9.94l-3.75-3.75L3 17.25zM20.71 7.04c.39-.39.39-1.02 0-1.41l-2.34-2.34c-.39-.39-1.02-.39-1.41 0l-1.83 1.83 3.75 3.75 1.83-1.83z"/></svg>
<svg class="ic" style="left:1851.8px;top:783.2px;width:17.5px;height:17.5px;" viewBox="0 0 24 24"><path fill="#2d4ab3" d="M3 18h12v-2H3v2zM3 6v2h18V6H3zm0 7h18v-2H3v2z"/></svg>
<div class="cb" style="top:835px"></div>
<div class="av" style="left:280.0px;top:827.0px;width:30px;height:30px;box-shadow:0 4px 5px rgba(0,0,0,.13),0 6px 22px rgba(0,0,0,.11);"><svg viewBox="0 0 100 100" width="30" height="30"><defs><linearGradient id="g" x1="0" y1="0" x2="0" y2="1"><stop offset="0" stop-color="#b3b3b3"/><stop offset="1" stop-color="#939393"/></linearGradient></defs><path fill="url(#g)" d="M50 4C40 4 31 7 27 16L25 40C21 40 21 48 26 51C28 58 32 64 36 68L36 74C30 77 18 79 12 80L12 100L88 100L88 80C82 79 70 77 64 74L64 68C68 64 72 58 74 51C79 48 79 40 75 40L75 20C74 10 63 3 55 4C53 4 52 4 50 4Z"/></svg></div>
<div class="cell blurb" style="left:476px;top:834px;letter-spacing:0">teste</div>
<div class="cell blur" style="left:675px;top:834px;color:#555">undefined</div>
<div class="cell blur" style="left:875px;top:834px;letter-spacing:0">teste@teste.pt</div>
<div class="cell" style="left:1080px;top:834px">Cliente Geral</div>
<div class="cell" style="left:1282px;top:834px">Parceiro</div>
<svg class="ic" style="left:1480.5px;top:831.5px;width:21px;height:21px;" viewBox="0 0 24 24"><path fill="#222" d="M12 5.9c1.16 0 2.1.94 2.1 2.1s-.94 2.1-2.1 2.1S9.9 9.16 9.9 8s.94-2.1 2.1-2.1m0 9c2.97 0 6.1 1.46 6.1 2.1v1.1H5.9V17c0-.64 3.13-2.1 6.1-2.1M12 4C9.79 4 8 5.79 8 8s1.79 4 4 4 4-1.79 4-4-1.79-4-4-4zm0 9c-2.67 0-8 1.34-8 4v3h16v-3c0-2.66-5.330-4-8-4z"/></svg>
<div class="st" style="top:834px">CONTACTO</div>
<svg class="ic" style="left:1801.8px;top:832.8px;width:17.5px;height:17.5px;" viewBox="0 0 24 24"><path fill="#2d4ab3" d="M19 3h-4.18C14.4 1.84 13.3 1 12 1c-1.3 0-2.4.84-2.82 2H5c-1.1 0-2 .9-2 2v14c0 1.1.9 2 2 2h14c1.1 0 2-.9 2-2V5c0-1.1-.9-2-2-2zm-7 0c.55 0 1 .45 1 1s-.45 1-1 1-1-.45-1-1 .45-1 1-1zm2 14H7v-2h7v2zm3-4H7v-2h10v2zm0-4H7V7h10v2z"/></svg>
<svg class="ic" style="left:1826.8px;top:833.2px;width:17.5px;height:17.5px;" viewBox="0 0 24 24"><path fill="#2d4ab3" d="M3 17.25V21h3.75L17.81 9.94l-3.75-3.75L3 17.25zM20.71 7.04c.39-.39.39-1.02 0-1.41l-2.34-2.34c-.39-.39-1.02-.39-1.41 0l-1.83 1.83 3.75 3.75 1.83-1.83z"/></svg>
<svg class="ic" style="left:1851.8px;top:833.2px;width:17.5px;height:17.5px;" viewBox="0 0 24 24"><path fill="#2d4ab3" d="M3 18h12v-2H3v2zM3 6v2h18V6H3zm0 7h18v-2H3v2z"/></svg>
<div class="ab" style="left:122px;top:867px;width:1756px;height:1px;background:#aaa"></div>
<div class="t" style="left:122px;top:886px;font-size:14px;color:#444;letter-spacing:-.14px">Mostrando de 1 até 10 de 47 registos</div>
<div class="pg" style="left:1337px;letter-spacing:-.6px">ANTERIOR</div>
<div class="ab" style="left:1442px;top:888px;width:30px;height:30px;border-radius:50%;background:#24357f;color:#fff;font-size:13px;text-align:center;line-height:30px">1</div>
<div class="pg" style="left:1521px;font-size:13px;top:895px">2</div>
<div class="pg" style="left:1589px;font-size:13px;top:895px">3</div>
<div class="pg" style="left:1657px;font-size:13px;top:895px">4</div>
<div class="pg" style="left:1725px;font-size:13px;top:895px">5</div>
<div class="pg" style="left:1793px;letter-spacing:-.6px">SEGUINTE</div>
</div></body></html>
